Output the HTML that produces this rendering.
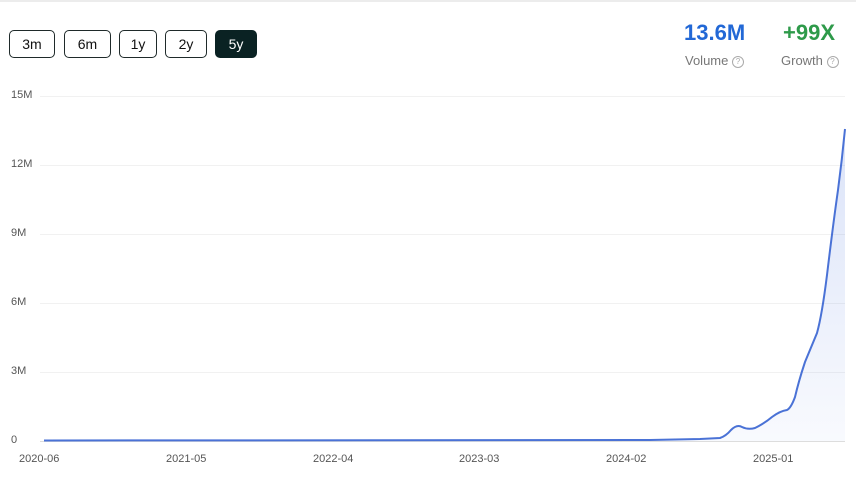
<!DOCTYPE html>
<html><head><style>
body{margin:0;width:856px;height:479px;background:#fff;font-family:"Liberation Sans",sans-serif;position:relative;overflow:hidden}
.top{position:absolute;left:0;top:0;width:856px;height:2px;background:#ececec}
.b{position:absolute;top:30px;height:28px;border:1px solid #1f2a2a;border-radius:5px;box-sizing:border-box;font-size:14px;color:#111;display:flex;align-items:center;justify-content:center}
.b.a{background:#0a2223;color:#fff;border-color:#0a2223}
.v{position:absolute;font-weight:bold;font-size:22px;top:20px}
.l{position:absolute;top:53px;font-size:13px;color:#777}
.q{display:inline-block;width:10px;height:10px;border:1px solid #aaa;border-radius:50%;font-size:8px;line-height:10px;text-align:center;color:#aaa;vertical-align:1px}
.y{position:absolute;left:11px;font-size:11px;color:#555}
.x{position:absolute;top:453px;font-size:11px;color:#555}
</style></head><body>
<div class="top"></div>
<div class="b" style="left:9px;width:46px">3m</div>
<div class="b" style="left:64px;width:47px">6m</div>
<div class="b" style="left:119px;width:38px">1y</div>
<div class="b" style="left:165px;width:42px">2y</div>
<div class="b a" style="left:215px;width:42px">5y</div>
<div class="v" style="left:684px;color:#2268d6">13.6M</div>
<div class="v" style="left:783px;color:#2e9a4a">+99X</div>
<div class="l" style="left:685px">Volume <span class="q">?</span></div>
<div class="l" style="left:781px">Growth <span class="q">?</span></div>
<div class="y" style="top:89px">15M</div>
<div class="y" style="top:158px">12M</div>
<div class="y" style="top:227px">9M</div>
<div class="y" style="top:296px">6M</div>
<div class="y" style="top:365px">3M</div>
<div class="y" style="top:434px">0</div>
<div class="x" style="left:19px">2020-06</div>
<div class="x" style="left:166px">2021-05</div>
<div class="x" style="left:313px">2022-04</div>
<div class="x" style="left:459px">2023-03</div>
<div class="x" style="left:606px">2024-02</div>
<div class="x" style="left:753px">2025-01</div>
<svg width="856" height="479" style="position:absolute;left:0;top:0">
<defs><linearGradient id="g" x1="0" y1="0" x2="0" y2="1"><stop offset="0" stop-color="#5b80e0" stop-opacity="0.22"/><stop offset="1" stop-color="#5b80e0" stop-opacity="0.04"/></linearGradient></defs>
<g stroke="#f1f1f1" stroke-width="1">
<line x1="40" x2="845" y1="96.5" y2="96.5"/><line x1="40" x2="845" y1="165.5" y2="165.5"/><line x1="40" x2="845" y1="234.5" y2="234.5"/><line x1="40" x2="845" y1="303.5" y2="303.5"/><line x1="40" x2="845" y1="372.5" y2="372.5"/>
</g>
<line x1="40" x2="845" y1="441.5" y2="441.5" stroke="#ddd"/>
<path d="M44 440.5 L650 440 L700 439 L720 438 Q726 436 731 430 Q737 424 742 427 Q748 430 755 428 Q765 423 772 417 Q780 411 787 410 Q791 408 795 397 Q799 380 805 362 Q812 345 817 333 Q822 315 827 275 Q833 225 838 190 Q842 160 845 129 L845 441 L44 441Z" fill="url(#g)"/>
<path d="M44 440.5 L650 440 L700 439 L720 438 Q726 436 731 430 Q737 424 742 427 Q748 430 755 428 Q765 423 772 417 Q780 411 787 410 Q791 408 795 397 Q799 380 805 362 Q812 345 817 333 Q822 315 827 275 Q833 225 838 190 Q842 160 845 129" fill="none" stroke="#4a72d6" stroke-width="2"/>
</svg>
</body></html>
